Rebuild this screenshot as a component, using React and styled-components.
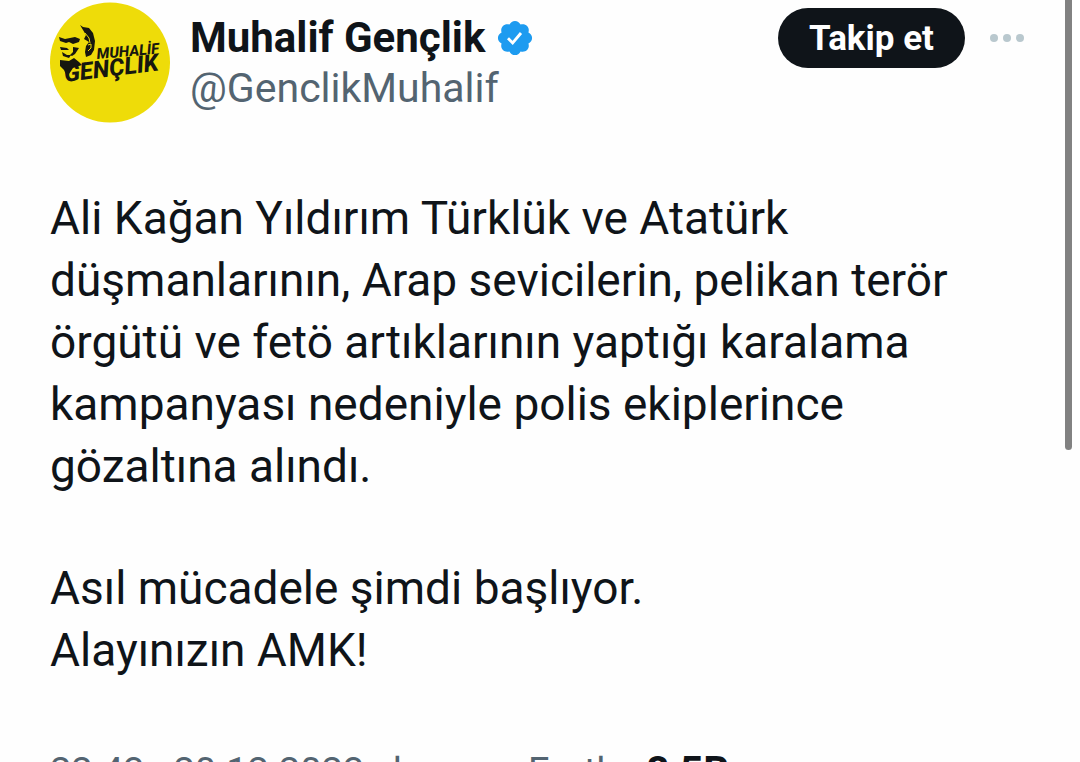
import styled, { createGlobalStyle } from "styled-components";

const textColor = "#0f1419";
const mutedColor = "#536471";

const GlobalStyle = createGlobalStyle`
  body {
    margin: 0;
    height: 100vh;
    overflow: hidden;
    background: #fefefe;
    color: ${textColor};
    font-family: Roboto, "Liberation Sans", sans-serif;
  }
`;

const Page = styled.div`
  display: flex;
  justify-content: space-between;
  height: 100vh;
  overflow: hidden;
`;

const Tweet = styled.article`
  flex: 1;
  min-width: 0;
  padding: 2px 40px 0 50px;
`;

const ScrollThumb = styled.div`
  flex: none;
  width: 7px;
  height: 59vh;
  margin-right: 8px;
  border-radius: 0 0 4px 4px;
  background: #818181;
`;

const Header = styled.header`
  display: flex;
  align-items: flex-start;
`;

const Avatar = styled.svg`
  flex: none;
  width: 120px;
  height: 121px;
  margin-right: 20px;
`;

const Names = styled.div`
  flex: 1;
  padding-top: 10px;
`;

const NameRow = styled.div`
  display: flex;
  align-items: center;
  gap: 10px;
  height: 52px;
`;

const Name = styled.span`
  font-size: 42px;
  font-weight: 700;
  line-height: 52px;
`;

const Handle = styled.a`
  display: block;
  color: ${mutedColor};
  font-size: 41px;
  line-height: 48px;
  text-decoration: none;
`;

const Actions = styled.div`
  display: flex;
  align-items: center;
  gap: 24px;
  padding-top: 6px;
`;

const FollowButton = styled.button`
  width: 187px;
  height: 60px;
  padding: 0;
  border: 0;
  border-radius: 30px;
  background: ${textColor};
  color: #fff;
  font: inherit;
  font-size: 35px;
  font-weight: 700;
`;

const MoreButton = styled.button`
  display: flex;
  padding: 0;
  border: 0;
  background: none;
`;

const Body = styled.div`
  display: flex;
  flex-direction: column;
  gap: 60px;
  margin-top: 64px;
`;

const Paragraph = styled.p`
  margin: 0;
  font-size: 46px;
  line-height: 62px;
  white-space: pre-line;
`;

const Meta = styled.div`
  margin-top: 64px;
  color: ${mutedColor};
  font-size: 38px;
  line-height: 52px;
  white-space: nowrap;

  strong {
    color: ${textColor};
    font-size: 41px;
  }
`;

const paragraphs = [
  `Ali Kağan Yıldırım Türklük ve Atatürk
düşmanlarının, Arap sevicilerin, pelikan terör
örgütü ve fetö artıklarının yaptığı karalama
kampanyası nedeniyle polis ekiplerince
gözaltına alındı.`,
  `Asıl mücadele şimdi başlıyor.
Alayınızın AMK!`,
];

function Logo() {
  return (
    <Avatar viewBox="0 0 120 121" role="img" aria-label="Muhalif Gençlik">
      <circle cx="60" cy="60.500" r="60" fill="#eedc09" />
      <g fill="#17170f">
        <path d="M9 35l6 2 10-2 5 2-1 3-6 2-4-2-3 1-6-2z" />
        <path d="M10 45l7 1 2 2-8 0zM23 45l6 1-4 6-3 2-2-1 3-3z" />
        <path d="M12 50l5 3 4 0-2 3-6-2z" />
        <path d="M10 58l9 1 5-3 5 4 3 3-9 3-4 6-1 5-4-9-4-4z" />
        <path d="M30 23l3 2 6 1 4 5 2 8-1 9-3 5-5 2-1-5 1-6 3-4-5-3 2-4-3-5z" />
      </g>
      <path
        d="M35 31l4 5 1 5M38 43l3-1 0 4-3 3"
        fill="none"
        stroke="#eedc09"
        strokeWidth="1"
      />
      <g fill="#17170f" fontFamily="Roboto, sans-serif" fontStyle="italic" fontWeight="800">
        <text x="47" y="57" fontSize="15" transform="rotate(-5 47 57)">
          MUHALİF
        </text>
        <text x="15" y="80" fontSize="24" transform="rotate(-7 15 80)">
          GENÇLIK
        </text>
      </g>
    </Avatar>
  );
}

function VerifiedBadge() {
  return (
    <svg width="40" height="40" viewBox="0 0 24 24" role="img" aria-label="Onaylanmış hesap">
      <path
        fill="#1d9bf0"
        d="M22.250 12c0-1.430-.880-2.670-2.190-3.340.460-1.390.200-2.900-.810-3.910s-2.520-1.270-3.910-.810c-.660-1.310-1.910-2.190-3.340-2.190s-2.670.880-3.330 2.190c-1.400-.460-2.910-.200-3.920.810s-1.260 2.520-.800 3.910c-1.310.670-2.200 1.910-2.200 3.340s.890 2.670 2.200 3.340c-.460 1.390-.210 2.900.800 3.910s2.520 1.260 3.910.810c.670 1.310 1.910 2.190 3.340 2.190s2.680-.880 3.340-2.190c1.390.450 2.900.200 3.910-.810s1.270-2.520.810-3.910c1.310-.670 2.190-1.910 2.190-3.340z"
      />
      <path d="M7.800 12.200l2.800 2.800 5-6" fill="none" stroke="#fff" strokeWidth="1.700" />
    </svg>
  );
}

function App() {
  return (
    <>
      <GlobalStyle />
      <Page>
        <Tweet>
          <Header>
            <Logo />
            <Names>
              <NameRow>
                <Name>Muhalif Gençlik</Name>
                <VerifiedBadge />
              </NameRow>
              <Handle href="#">@GenclikMuhalif</Handle>
            </Names>
            <Actions>
              <FollowButton>Takip et</FollowButton>
              <MoreButton aria-label="Daha fazla">
                <svg width="36" height="10" viewBox="0 0 36 10" fill="#b9c8ce">
                  <circle cx="5" cy="5" r="4" />
                  <circle cx="18" cy="5" r="4" />
                  <circle cx="31" cy="5" r="4" />
                </svg>
              </MoreButton>
            </Actions>
          </Header>
          <Body>
            {paragraphs.map((text) => (
              <Paragraph key={text}>{text}</Paragraph>
            ))}
          </Body>
          <Meta>
            22:43 · 20.12.2023 · konum: Earth · <strong>8,5B</strong>
          </Meta>
        </Tweet>
        <ScrollThumb />
      </Page>
    </>
  );
}

export default App;
